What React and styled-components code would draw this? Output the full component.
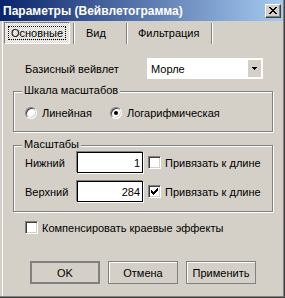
import React from 'react';
import styled, { createGlobalStyle } from 'styled-components';

const GlobalStyle = createGlobalStyle`
  html, body {
    margin: 0;
    padding: 0;
    background: #d4d0c8;
  }
  body {
    font-family: "Liberation Sans", Arial, sans-serif;
    font-size: 11px;
    color: #000;
  }
`;

const Window = styled.div`
  width: 285px;
  height: 298px;
  box-sizing: border-box;
  background: #d4d0c8;
  display: flex;
  flex-direction: column;
  box-shadow: inset -1px -1px #404040, inset -2px -2px #808080,
    inset 2px 0 #d4d0c8, inset 3px 0 #fff;
`;

const TitleBar = styled.div`
  height: 21px;
  margin: 0 2px 0 0;
  display: flex;
  align-items: center;
  padding: 0 2px 0 3px;
  background: linear-gradient(90deg, #0a246a, #a6caf0);
  color: #fff;
  font-weight: bold;
  font-size: 12px;
`;

const TitleText = styled.span`
  flex: 1;
`;

const CloseButton = styled.div`
  width: 16px;
  height: 14px;
  box-sizing: border-box;
  display: flex;
  align-items: center;
  justify-content: center;
  background: #d4d0c8;
  border: 1px solid;
  border-color: #fff #404040 #404040 #fff;
  box-shadow: inset -1px -1px #808080;
`;

const TabStrip = styled.div`
  display: flex;
  height: 22px;
  margin-top: 1px;
  padding-left: 4px;
`;

const Tab = styled.div`
  box-sizing: border-box;
  width: ${p => p.$width}px;
  height: 22px;
  display: flex;
  align-items: center;
  padding-left: ${p => p.$pad || 0}px;
  ${p => p.$active && `
    padding: 3px;
    border: 1px solid;
    border-color: #808080 #fff #fff #808080;
    background-color: #fff;
    background-image: conic-gradient(#d4d0c8 25%, #fff 0 50%, #d4d0c8 0 75%, #fff 0);
    background-size: 2px 2px;
  `}
`;

const FocusRect = styled.span`
  flex: 1;
  align-self: stretch;
  display: flex;
  align-items: center;
  justify-content: center;
  border: 1px dotted #000;
`;

const TabDivider = styled.div`
  width: 1px;
  height: 21px;
  margin-top: 1px;
  margin-left: ${p => p.$gap}px;
  background: #808080;
  border-right: 1px solid #fff;
`;

const Page = styled.div`
  display: flex;
  flex-direction: column;
  padding: 14px 12px 0 13px;
`;

const WaveletRow = styled.div`
  display: flex;
  align-items: center;
  padding-left: 12px;
`;

const Label = styled.span`
  width: ${p => p.$width}px;
  flex-shrink: 0;
`;

const Combo = styled.div`
  width: 116px;
  height: 21px;
  box-sizing: border-box;
  background: #fff;
  display: flex;
  align-items: stretch;
  padding: 2px 2px 2px 4px;
`;

const ComboText = styled.span`
  flex: 1;
  display: flex;
  align-items: center;
`;

const ComboButton = styled.span`
  width: 13px;
  background: #d4d0c8;
  display: flex;
  align-items: center;
  justify-content: center;
`;

const Group = styled.div`
  position: relative;
  margin-top: ${p => p.$top}px;
  border: 1px solid #808080;
  box-shadow: inset 1px 1px #fff, 1px 1px #fff;
  display: flex;
  flex-direction: column;
  padding: ${p => p.$pad};
`;

const Legend = styled.span`
  position: absolute;
  top: -8px;
  left: 8px;
  line-height: 13px;
  padding: 0 2px;
  background: #d4d0c8;
`;

const RadioRow = styled.div`
  display: flex;
  align-items: center;
  height: 13px;
`;

const RadioItem = styled.label`
  display: flex;
  align-items: center;
  width: ${p => (p.$width ? `${p.$width}px` : 'auto')};
`;

const RadioCircle = styled.span`
  width: 12px;
  height: 12px;
  box-sizing: border-box;
  border-radius: 50%;
  background: #fff;
  border: 1px solid;
  border-color: #808080 #fff #fff #808080;
  box-shadow: inset 1px 1px #404040, inset -1px -1px #d4d0c8;
  display: flex;
  align-items: center;
  justify-content: center;
  margin-right: 5px;

  &::after {
    content: '';
    width: 4px;
    height: 4px;
    border-radius: 50%;
    background: ${p => (p.$checked ? '#000' : 'transparent')};
  }
`;

const ScaleRow = styled.div`
  display: flex;
  align-items: center;
  height: 21px;
  & + & {
    margin-top: 8px;
  }
`;

const NumberInput = styled.div`
  width: 66px;
  height: 21px;
  box-sizing: border-box;
  background: #fff;
  border: 1px solid #000;
  box-shadow: -1px -1px #808080, 1px 1px #fff;
  display: flex;
  align-items: center;
  justify-content: flex-end;
  padding-right: 2px;
`;

const CheckItem = styled.label`
  display: flex;
  align-items: center;
  margin-left: ${p => p.$left || 0}px;
`;

const CheckBox = styled.span`
  width: 13px;
  height: 13px;
  box-sizing: border-box;
  background: #fff;
  border: 1px solid;
  border-color: #808080 #fff #fff #808080;
  box-shadow: inset 1px 1px #404040, inset -1px -1px #d4d0c8;
  display: flex;
  align-items: center;
  justify-content: center;
  margin-right: 4px;
`;

const CompensateRow = styled.div`
  display: flex;
  margin-top: 9px;
  padding-left: 12px;
`;

const ButtonRow = styled.div`
  display: flex;
  gap: 8px;
  margin-top: 27px;
  padding-left: 17px;
`;

const Button = styled.div`
  width: 70px;
  height: 23px;
  box-sizing: border-box;
  display: flex;
  align-items: center;
  justify-content: center;
  border: ${p => (p.$default ? 2 : 1)}px solid #808080;
  box-shadow: ${p => (p.$default ? 'none' : 'inset 1px 1px #fff')};
`;

const CloseIcon = () => (
  <svg width="8" height="7" viewBox="0 0 8 7" shapeRendering="crispEdges">
    <path
      fill="#000"
      d="M0 0h2v1H0z M6 0h2v1H6z M1 1h2v1H1z M5 1h2v1H5z M2 2h4v1H2z M3 3h2v1H3z M2 4h4v1H2z M1 5h2v1H1z M5 5h2v1H5z M0 6h2v1H0z M6 6h2v1H6z"
    />
  </svg>
);

const ArrowIcon = () => (
  <svg width="5" height="3" viewBox="0 0 5 3" shapeRendering="crispEdges">
    <path fill="#000" d="M0 0h5v1H0z M1 1h3v1H1z M2 2h1v1H2z" />
  </svg>
);

const CheckIcon = () => (
  <svg width="7" height="7" viewBox="0 0 7 7" shapeRendering="crispEdges">
    <path
      fill="#000"
      d="M6 0h1v1H6z M5 1h2v1H5z M0 2h1v1H0z M4 2h3v1H4z M0 3h2v1H0z M3 3h3v1H3z M0 4h5v1H0z M1 5h3v1H1z M2 6h1v1H2z"
    />
  </svg>
);

const scales = [
  { label: 'Нижний', value: '1', bound: false },
  { label: 'Верхний', value: '284', bound: true },
];

export default function App() {
  return (
    <>
      <GlobalStyle />
      <Window>
        <TitleBar>
          <TitleText>Параметры (Вейвлетограмма)</TitleText>
          <CloseButton>
            <CloseIcon />
          </CloseButton>
        </TitleBar>

        <TabStrip>
          <Tab $active $width={66}>
            <FocusRect>Основные</FocusRect>
          </Tab>
          <TabDivider $gap={3} />
          <Tab $width={51} $pad={11}>Вид</Tab>
          <TabDivider $gap={0} />
          <Tab $width={83} $pad={10}>Фильтрация</Tab>
          <TabDivider $gap={0} />
        </TabStrip>

        <Page>
          <WaveletRow>
            <Label $width={122}>Базисный вейвлет</Label>
            <Combo>
              <ComboText>Морле</ComboText>
              <ComboButton>
                <ArrowIcon />
              </ComboButton>
            </Combo>
          </WaveletRow>

          <Group $top={12} $pad="14px 0 12px 11px">
            <Legend>Шкала масштабов</Legend>
            <RadioRow>
              <RadioItem $width={85}>
                <RadioCircle />
                Линейная
              </RadioItem>
              <RadioItem>
                <RadioCircle $checked />
                Логарифмическая
              </RadioItem>
            </RadioRow>
          </Group>

          <Group $top={13} $pad="6px 0 9px 11px">
            <Legend>Масштабы</Legend>
            {scales.map(s => (
              <ScaleRow key={s.label}>
                <Label $width={52}>{s.label}</Label>
                <NumberInput>{s.value}</NumberInput>
                <CheckItem $left={5}>
                  <CheckBox>{s.bound && <CheckIcon />}</CheckBox>
                  Привязать к длине
                </CheckItem>
              </ScaleRow>
            ))}
          </Group>

          <CompensateRow>
            <CheckItem>
              <CheckBox />
              Компенсировать краевые эффекты
            </CheckItem>
          </CompensateRow>

          <ButtonRow>
            <Button $default>OK</Button>
            <Button>Отмена</Button>
            <Button>Применить</Button>
          </ButtonRow>
        </Page>
      </Window>
    </>
  );
}
